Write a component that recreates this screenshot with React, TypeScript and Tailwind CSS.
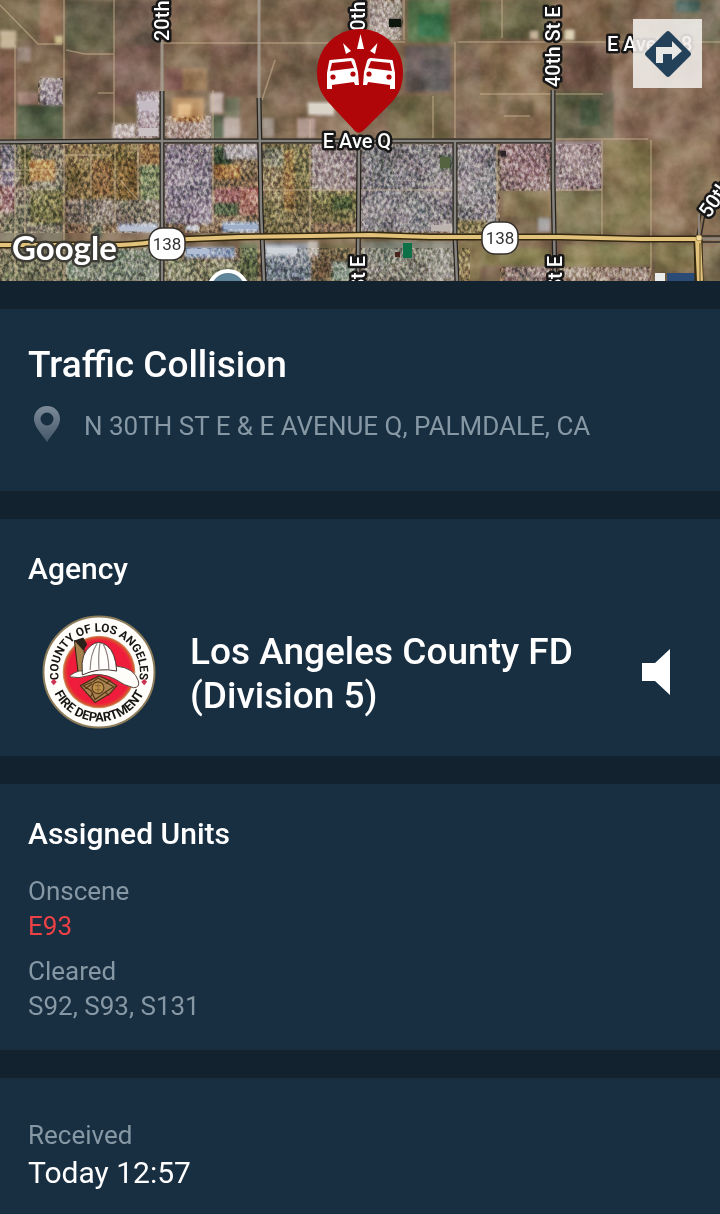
import type { ReactNode } from "react";

type Patch = [x: number, y: number, w: number, h: number, fill: string];

const terrain: Patch[] = [
  [0, 0, 40, 40, "#75664c"],
  [40, 0, 22, 42, "#8d6d52"],
  [66, 0, 48, 52, "#67624c"],
  [66, 52, 48, 86, "#75604d"],
  [114, 0, 46, 45, "#776354"],
  [114, 45, 46, 60, "#7d6155"],
  [164, 0, 76, 42, "#8b715a"],
  [210, 45, 48, 50, "#775c4c"],
  [165, 68, 18, 22, "#8a635b"],
  [183, 68, 24, 22, "#a28260"],
  [0, 48, 16, 90, "#7b5a49"],
  [17, 105, 46, 34, "#596248"],
  [0, 31, 16, 17, "#c4b395"],
  [17, 47, 14, 15, "#9f8a7f"],
  [40, 78, 23, 27, "#a3959a"],
  [18, 92, 20, 12, "#a8897c"],
  [55, 36, 8, 8, "#d8c79c"],
  [137, 92, 23, 46, "#b4a5aa"],
  [138, 100, 20, 12, "#ccc3cb"],
  [113, 124, 23, 15, "#c9bebc"],
  [165, 116, 46, 23, "#b5a398"],
  [172, 98, 32, 24, "#b89064"],
  [178, 104, 13, 12, "#e0ba87"],
  [210, 93, 13, 20, "#c6b5ad"],
  [211, 115, 13, 24, "#4c5941"],
  [224, 118, 16, 20, "#b4a79c"],
  [225, 98, 15, 20, "#7d7d66"],
  [262, 0, 98, 42, "#7f6a53"],
  [262, 44, 96, 60, "#7d6651"],
  [262, 118, 12, 20, "#aa9a92"],
  [308, 103, 26, 12, "#dad3c8"],
  [297, 118, 18, 20, "#bda69d"],
  [316, 116, 42, 22, "#8b745b"],
  [368, 0, 34, 40, "#ada198"],
  [408, 0, 42, 42, "#5c7650"],
  [418, 14, 26, 22, "#3b7550"],
  [389, 18, 13, 9, "#11120f"],
  [405, 46, 46, 46, "#6c625d"],
  [420, 60, 30, 30, "#5f5a58"],
  [388, 96, 64, 43, "#766a4b"],
  [456, 45, 30, 93, "#87705b"],
  [480, 0, 72, 39, "#6b6646"],
  [480, 44, 72, 94, "#8b7256"],
  [504, 100, 30, 16, "#7a654b"],
  [560, 0, 52, 40, "#7d6349"],
  [562, 46, 50, 48, "#705747"],
  [556, 92, 60, 46, "#63604a"],
  [580, 100, 20, 26, "#48563f"],
  [614, 45, 106, 95, "#8b705b"],
  [672, 0, 48, 44, "#7d7560"],
  [676, 0, 24, 12, "#59706a"],
  [565, 30, 9, 10, "#ddd1b4"],
  [530, 31, 8, 8, "#cfc0a8"],
];

const town: Patch[] = [
  [0, 144, 64, 138, "#847b69"],
  [0, 144, 15, 60, "#8f8590"],
  [0, 186, 14, 26, "#a78483"],
  [20, 148, 12, 38, "#635f3a"],
  [30, 160, 25, 21, "#b68e58"],
  [66, 144, 72, 60, "#7d6a45"],
  [91, 160, 22, 36, "#80623a"],
  [118, 160, 18, 40, "#87693f"],
  [139, 144, 22, 20, "#8c6b42"],
  [140, 165, 21, 35, "#75805a"],
  [30, 190, 34, 34, "#7b7650"],
  [66, 200, 94, 24, "#8d8276"],
  [165, 144, 47, 80, "#918591"],
  [214, 146, 18, 20, "#475740"],
  [214, 165, 26, 14, "#a87d4e"],
  [225, 144, 34, 15, "#b4acad"],
  [214, 188, 45, 14, "#a06e6d"],
  [214, 203, 24, 12, "#45573b"],
  [66, 249, 95, 32, "#808878"],
  [0, 249, 64, 32, "#77745b"],
  [165, 260, 94, 21, "#86856b"],
  [185, 247, 50, 11, "#9aa6bd"],
  [93, 225, 9, 14, "#4a5146"],
  [118, 224, 40, 8, "#bfc6d6"],
  [185, 225, 14, 6, "#d3d7de"],
  [222, 222, 37, 10, "#a7b7d1"],
  [240, 189, 18, 26, "#b28174"],
  [263, 144, 48, 88, "#7e724f"],
  [263, 148, 20, 18, "#8a8570"],
  [284, 150, 10, 60, "#9b7a4e"],
  [312, 144, 46, 46, "#9b8d8d"],
  [312, 191, 46, 32, "#78724c"],
  [332, 196, 20, 14, "#54603d"],
  [361, 144, 93, 88, "#8a8588"],
  [440, 155, 12, 14, "#4e6146"],
  [440, 223, 14, 9, "#d0c8c3"],
  [457, 144, 40, 80, "#908a8e"],
  [457, 220, 30, 14, "#8b7d58"],
  [500, 141, 50, 49, "#9a7f80"],
  [554, 141, 48, 49, "#a08d8e"],
  [499, 151, 7, 6, "#2c2427"],
  [263, 243, 48, 38, "#848b94"],
  [266, 246, 30, 10, "#c3c8d0"],
  [308, 241, 10, 16, "#beb5ac"],
  [240, 243, 18, 38, "#6e7555"],
  [318, 243, 38, 20, "#716246"],
  [332, 262, 26, 19, "#93a08f"],
  [361, 241, 94, 40, "#8d8b7f"],
  [457, 241, 24, 40, "#8f7e58"],
  [505, 267, 45, 14, "#9a8682"],
  [558, 268, 92, 13, "#a59285"],
  [538, 218, 12, 14, "#aaa6a6"],
];

const scrub: Patch[] = [
  [503, 191, 48, 26, "#8c7a58"],
  [556, 191, 46, 42, "#817a59"],
  [603, 141, 48, 92, "#8a7c57"],
  [652, 141, 68, 92, "#8c7359"],
  [562, 244, 90, 22, "#8a8057"],
  [655, 244, 40, 28, "#817650"],
  [480, 248, 70, 18, "#857b51"],
  [704, 246, 16, 36, "#817456"],
];

const landmarks: Patch[] = [
  [389, 19, 12, 8, "#11120f"],
  [403, 243, 9, 15, "#087047"],
  [395, 252, 5, 5, "#4a241b"],
  [501, 151, 5, 5, "#2c2427"],
  [440, 157, 10, 11, "#56643f"],
  [667, 273, 28, 8, "#294c74"],
  [655, 273, 10, 8, "#e9ecea"],
  [120, 227, 36, 4, "#b8c0d0"],
  [224, 225, 34, 4, "#a0afc8"],
  [187, 249, 22, 5, "#b0bed5"],
  [267, 248, 30, 5, "#cdd2d8"],
  [310, 104, 22, 9, "#dad3c8"],
  [139, 101, 19, 9, "#c5bcc3"],
  [139, 128, 19, 8, "#c9c1c4"],
  [431, 225, 20, 6, "#bdb4b0"],
];

const tracks = [
  "M64 0V281", "M15 45V281", "M0 5L38 44H62", "M66 50L85 54H114", "M114 0V138",
  "M162 43H330", "M91 144V196", "M115 144V222", "M138 144V200", "M213 90V225",
  "M98 93H114", "M404 0V40", "M405 42H358", "M455 42V138", "M458 42H720", "M433 96V138",
  "M480 94H603", "M502 0V38", "M504 116H530", "M556 139H648", "M602 140V236", "M651 140V270",
  "M556 190H602", "M497 144V225", "M262 100L275 60", "M310 120V232", "M361 190H455",
  "M263 190H357", "M0 170H64", "M25 145V240", "M66 155H112", "M120 180L138 200",
];

const streets = [
  "M0 142L130 141H552", "M162 91V281", "M259 98L261 210L264 281", "M359 150L358 281",
  "M455 141V236L457 281", "M553 90V180L555 281",
];

const highway = "M0 245H120Q145 244 165 240L240 237L310 236L370 235L430 237H560L640 239H698";

function Patches({ items }: { items: Patch[] }) {
  return (
    <>
      {items.map(([x, y, w, h, fill], i) => (
        <rect key={i} x={x} y={y} width={w} height={h} fill={fill} />
      ))}
    </>
  );
}

function Shield({ x, y }: { x: number; y: number }) {
  return (
    <g>
      <rect x={x - 18} y={y - 16} width="36" height="32" rx="13" fill="#fff" stroke="#34302c" strokeWidth="1.5" />
      <text x={x} y={y + 6} textAnchor="middle" fontSize="17" fill="#333">138</text>
    </g>
  );
}

function Car() {
  return (
    <g>
      <path fillRule="evenodd" fill="#fff" d="M4 2L25 0Q28 0 29 3L32 14L33 27H29L28 24L6 27V31H1V15L3 4Q3 2 4 2ZM6 5L4 13L28 10L25 3Z" />
      <circle cx="7" cy="19" r="2.600" fill="#b00509" />
      <circle cx="27" cy="16" r="2.600" fill="#b00509" />
    </g>
  );
}

function SatelliteMap() {
  return (
    <svg viewBox="0 0 720 281" preserveAspectRatio="xMidYMid slice" className="block h-[281px] w-full font-['Roboto',sans-serif]" role="img" aria-label="Satellite map">
      <defs>
        <filter id="soft" x="0" y="0" width="100%" height="100%"><feGaussianBlur stdDeviation="1.6" /></filter>
        <filter id="faint"><feGaussianBlur stdDeviation="0.6" /></filter>
        <filter id="ground" x="0" y="0" width="100%" height="100%" colorInterpolationFilters="sRGB">
          <feTurbulence type="fractalNoise" baseFrequency="0.035" numOctaves="5" seed="8" />
          <feColorMatrix values="1.8 0.4 0 0 -0.6  1.5 0.7 0 0 -0.6  1.5 0.5 0.2 0 -0.6  0 0 0 0 1" />
        </filter>
        <filter id="roofs" x="0" y="0" width="100%" height="100%" colorInterpolationFilters="sRGB">
          <feTurbulence type="fractalNoise" baseFrequency="0.32 0.22" numOctaves="3" seed="21" />
          <feColorMatrix values="2.4 0.3 0 0 -0.85  2.2 0.5 0 0 -0.85  2.1 0.3 0.3 0 -0.85  0 0 0 0 1" />
          <feGaussianBlur stdDeviation="0.5" />
        </filter>
        <clipPath id="townClip">
          <path d="M0 144H602V191H500V233H0ZM0 248H470V281H0ZM500 267H652V281H500ZM137 92H160V139H113V124H137ZM165 116H211V139H165ZM38 78H63V105H38ZM370 0H402V40H370Z" />
        </clipPath>
      </defs>

      <rect width="720" height="281" fill="#826b54" />
      <g filter="url(#soft)">
        <Patches items={terrain} />
        <Patches items={scrub} />
        <Patches items={town} />
      </g>
      <rect width="720" height="281" filter="url(#ground)" opacity="0.45" className="mix-blend-soft-light" />
      <g clipPath="url(#townClip)" className="mix-blend-overlay">
        <rect width="720" height="281" filter="url(#roofs)" opacity="0.42" />
      </g>
      <g filter="url(#faint)"><Patches items={landmarks} /></g>
      <g fill="none" stroke="#d3bd98" strokeWidth="1.5" opacity="0.5" filter="url(#faint)">
        {tracks.map((d) => <path key={d} d={d} />)}
      </g>
      <g fill="none" stroke="#a9a29a" strokeWidth="3" opacity="0.8">
        <path d="M162 40V92M259 0V98" />
      </g>

      <g fill="none">
        {streets.map((d) => <path key={d} d={d} stroke="#25231f" strokeWidth="5" />)}
        {streets.map((d) => <path key={d} d={d} stroke="#86827d" strokeWidth="2.5" />)}
        <path d="M698 236H720M698 242H720M697 236L701 214M701 236L705 214" stroke="#2f2c27" strokeWidth="1.5" />
        <path d="M699 238V214M700 239H720" stroke="#8d857b" strokeWidth="2" />
        <path d={highway} stroke="#33290f" strokeWidth="7" />
        <path d="M698 239L699 281" stroke="#33290f" strokeWidth="9" />
        <path d={highway} stroke="#e3c37b" strokeWidth="4" />
        <path d="M698 237L700 281" stroke="#e3c37b" strokeWidth="6" />
        <path d="M700 243V281" stroke="#5c4b22" strokeWidth="1" />
        <circle cx="699" cy="238" r="3" fill="#f3db9f" stroke="#a98f50" />
      </g>

      <circle cx="228" cy="290" r="19" fill="#60849a" stroke="#fff" strokeWidth="4" />

      <g fill="#fff" stroke="#171717" strokeWidth="5" strokeLinejoin="round" paintOrder="stroke" fontSize="20" fontWeight="500">
        <text transform="translate(169 41) rotate(-90)">20th</text>
        <text transform="translate(365 42) rotate(-90)">30th</text>
        <text transform="translate(560 87) rotate(-90)">40th St E</text>
        <text transform="translate(365 291) rotate(-90)">St E</text>
        <text transform="translate(562 291) rotate(-90)">St E</text>
        <text transform="translate(709 219) rotate(-55)">50th</text>
        <text x="607" y="51">E Ave P-8</text>
        <text x="357" y="148" textAnchor="middle">E Ave Q</text>
      </g>

      <text x="12" y="260" fill="#fff" stroke="#3b3a34" strokeWidth="5" strokeLinejoin="round" paintOrder="stroke" fontSize="33" fontWeight="700" className="font-['Lato',sans-serif]">Google</text>
      <Shield x={167} y={244} />
      <Shield x={500} y={238} />

      <path d="M360 29C336 29 317 48 317 72C317 87 322 95 330 104L355 131Q359 135 364 130L391 103C399 94 403 86 403 72C403 48 384 29 360 29Z" fill="#b00509" />
      <path d="M360.500 34L364 49H357ZM343 43L351 51L346 54ZM377.500 43L375 54L370 51Z" fill="#fff" />
      <g transform="translate(326 58)"><Car /></g>
      <g transform="translate(396 58) scale(-1 1)"><Car /></g>
    </svg>
  );
}

function Seal() {
  return (
    <svg viewBox="0 0 116 116" className="size-[114px] shrink-0" role="img" aria-label="County of Los Angeles Fire Department">
      <defs>
        <path id="sealTop" d="M17.200 66A41.500 41.500 0 1 1 98.800 66" />
        <path id="sealBottom" d="M7.600 58A50.400 50.400 0 0 0 108.400 58" />
        <radialGradient id="sealRed">
          <stop offset="0.86" stopColor="#f01c3c" />
          <stop offset="0.95" stopColor="#d8502f" />
          <stop offset="1" stopColor="#c9a878" />
        </radialGradient>
      </defs>
      <circle cx="58" cy="58" r="56.500" fill="#fffefa" stroke="#8c7c5a" strokeWidth="2" />
      <circle cx="58" cy="58" r="37" fill="url(#sealRed)" />
      <g fill="#171512" fontSize="12" textAnchor="middle" className="font-['Roboto',sans-serif] font-bold">
        <text><textPath href="#sealTop" startOffset="50%">COUNTY OF LOS ANGELES</textPath></text>
        <text fontSize="13"><textPath href="#sealBottom" startOffset="50%">FIRE DEPARTMENT</textPath></text>
      </g>
      <path d="M12 65L15 68L12 71.500L9 68ZM104 65L107 68L104 71.500L101 68Z" fill="#cf3150" />
      <path d="M33 26L42 29L45 56L37 61L35 44Z" fill="#a5824c" stroke="#2a1d12" strokeWidth="1" />
      <path d="M33 26L42 23L46 30L42 36Z" fill="#29221b" />
      <path d="M28 62Q38 54 48 58Q62 53 76 52Q94 54 98 67Q100 74 93 74Q84 72 74 65Q60 58 46 62Q38 65 29 63Z" fill="#fffdfa" stroke="#59433b" strokeWidth="1" />
      <path d="M41 58Q39 39 50 31Q57 25 66 31Q75 38 76 57Q58 53 41 61Z" fill="#fffefd" stroke="#3d302b" strokeWidth="1" />
      <path d="M56 29Q49 40 49 56M59 29Q57 41 58 55M62 29Q68 40 68 55" fill="none" stroke="#8d817b" strokeWidth="1.200" />
      <path d="M58 62L67 66L76 72L69 80L54 89L47 81L39 72L50 66Z" fill="#a98450" stroke="#49301a" strokeWidth="1.200" />
      <path d="M42 72L52 68L57 64L64 68L73 73L65 78L54 86L50 77Z M51 70L44 75M65 70L70 66M64 78L68 82M52 79L49 84" fill="none" stroke="#543719" strokeWidth="1.200" />
      <circle cx="57" cy="74" r="6" fill="#bc8f4b" stroke="#573b1b" strokeWidth="1.200" />
      <path d="M54 72H60M54 76H60M57 69V79" stroke="#7d5d2d" strokeWidth="0.800" />
    </svg>
  );
}

function Card({ className, children }: { className: string; children: ReactNode }) {
  return <section className={`bg-[#182e41] px-7 ${className}`}>{children}</section>;
}

export default function App() {
  return (
    <main className="flex min-h-screen flex-col gap-7 overflow-hidden bg-[#12222e] font-['Roboto',sans-serif] text-white">
      <header className="relative">
        <SatelliteMap />
        <button type="button" aria-label="Directions" className="absolute top-[19px] right-[18px] flex size-[69px] items-center justify-center bg-[#f1eeea]/88">
          <svg viewBox="0 0 48 48" className="size-12" aria-hidden="true">
            <path d="M22 2Q24 0 26 2L46 22Q48 24 46 26L26 46Q24 48 22 46L2 26Q0 24 2 22Z" fill="#24415a" />
            <path d="M12 33V17H28V11L38 21L28 30V24H19V33Z" fill="#e8e8e7" />
          </svg>
        </button>
      </header>

      <Card className="pt-[34px] pb-[47px]">
        <h1 className="text-[37px] leading-[44px] font-medium">Traffic Collision</h1>
        <div className="mt-[18px] flex items-start gap-6">
          <svg viewBox="0 0 26 36" className="mt-px ml-[6px] h-9 w-[26px]" aria-hidden="true">
            <defs>
              <linearGradient id="pinShade" x2="0" y2="1">
                <stop stopColor="#7d8b99" />
                <stop offset="1" stopColor="#445769" />
              </linearGradient>
            </defs>
            <path fillRule="evenodd" d="M13 0C5 0 0 6 0 13C0 21 8 28 13 36C18 28 26 21 26 13C26 6 21 0 13 0ZM13 6.500A6.500 6.500 0 1 1 13 19.500A6.500 6.500 0 1 1 13 6.500Z" fill="url(#pinShade)" />
          </svg>
          <p className="pt-1 text-[26px] leading-[35px] text-[#8798a5]">N 30TH ST E &amp; E AVENUE Q, PALMDALE, CA</p>
        </div>
      </Card>

      <Card className="pt-8 pb-[27px]">
        <h2 className="text-[30px] leading-9 font-medium">Agency</h2>
        <div className="mt-7 flex items-center">
          <div className="ml-[14px]"><Seal /></div>
          <p className="ml-[34px] w-[400px] pt-1 text-[37px] leading-[44px] font-medium">Los Angeles County FD (Division 5)</p>
          <button type="button" aria-label="Play audio" className="mr-[22px] ml-auto">
            <svg viewBox="0 0 28 46" className="h-[46px] w-7" aria-hidden="true">
              <path d="M0 14H13L28 0V46L13 32H0Z" fill="#fff" />
            </svg>
          </button>
        </div>
      </Card>

      <Card className="pt-8 pb-[26px]">
        <h2 className="text-[30px] leading-9 font-medium">Assigned Units</h2>
        <dl className="mt-[22px] text-[26px] leading-[35px] text-[#8798a5]">
          <dt>Onscene</dt>
          <dd className="text-[#ed4145]">E93</dd>
          <dt className="mt-[10px]">Cleared</dt>
          <dd>S92, S93, S131</dd>
        </dl>
      </Card>

      <Card className="grow pt-10 pb-5">
        <dl>
          <dt className="text-[26px] leading-[35px] text-[#8798a5]">Received</dt>
          <dd className="text-[30px] leading-10">Today 12:57</dd>
        </dl>
      </Card>
    </main>
  );
}
